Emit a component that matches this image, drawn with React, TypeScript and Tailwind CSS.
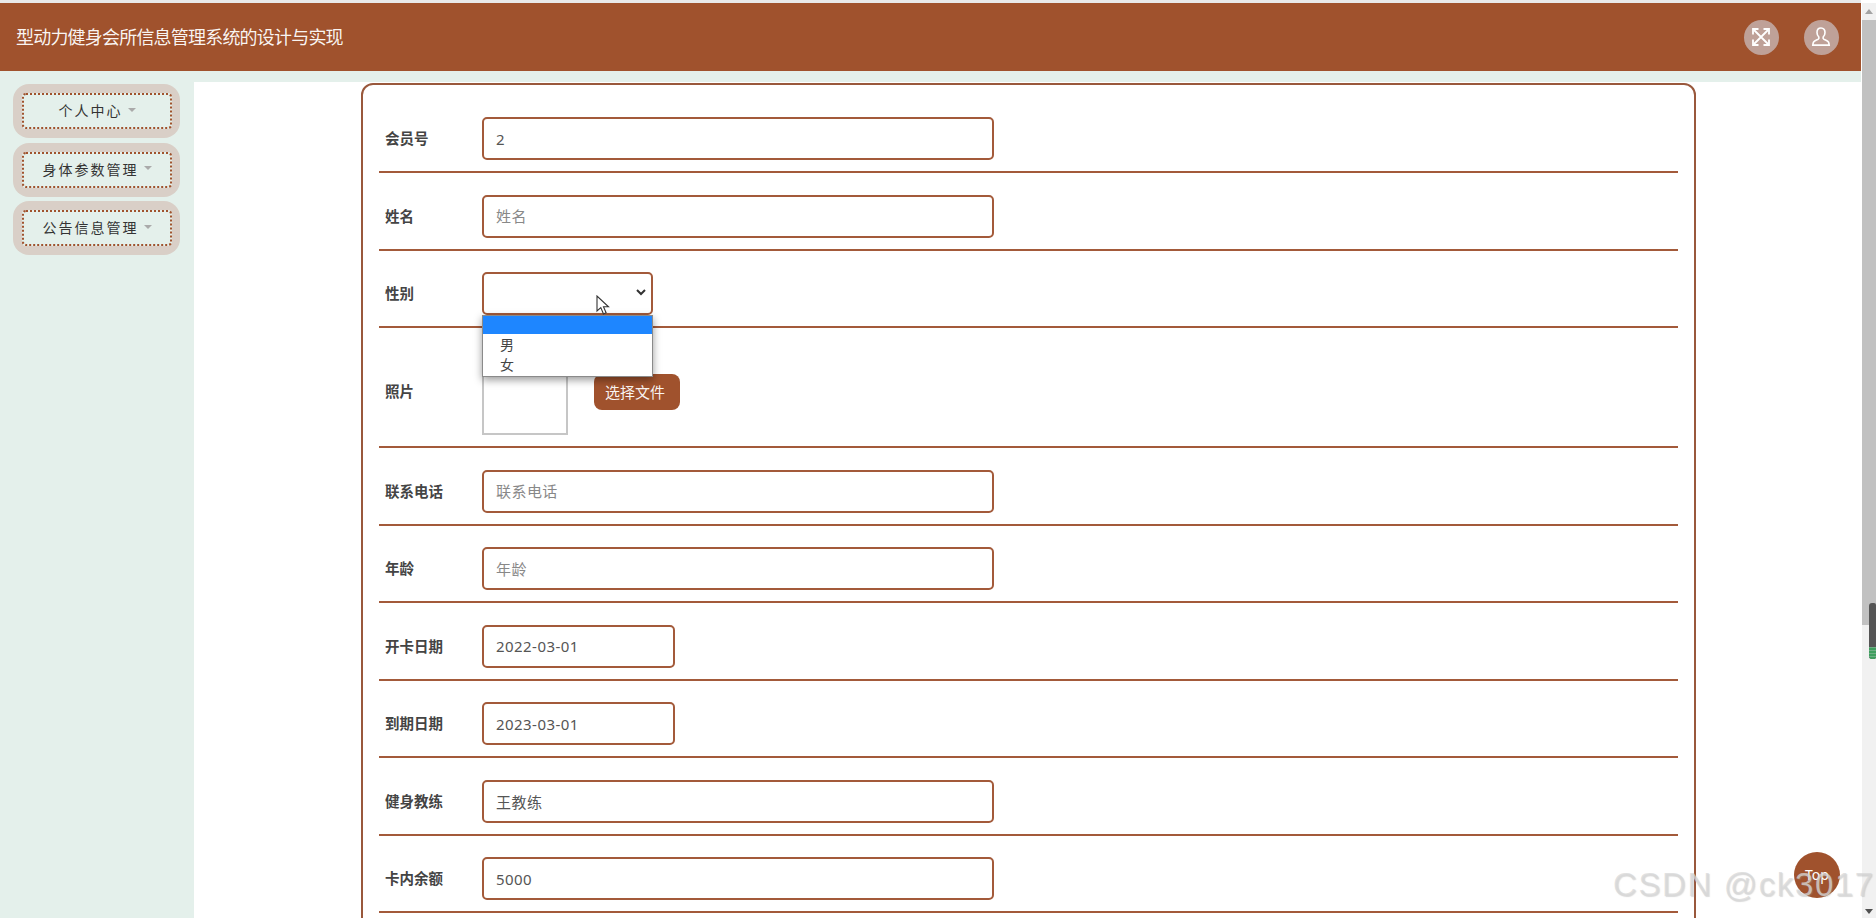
import React from 'react';

const cjk = "font-['Noto_Sans','Noto_Sans_CJK_SC',sans-serif]";

const menus = ['个人中心', '身体参数管理', '公告信息管理'];

const inputClass =
  'h-[43px] border-2 border-[#a35a3a] rounded-[5px] px-3 text-[15px] tracking-[0.45px] text-[#555] bg-white outline-none placeholder:text-[#888]';

const Row: React.FC<{ label: string; children: React.ReactNode }> = ({ label, children }) => (
  <div className="flex items-center pt-[21.500px] pb-[11px] border-b-2 border-[#a35a3a]">
    <label className="w-[103px] pl-[6px] pt-[1px] shrink-0 text-[14.5px] font-bold text-[#444]">{label}</label>
    {children}
  </div>
);

const ExpandIcon = () => (
  <svg width="20" height="20" viewBox="0 0 20 20" fill="none" stroke="white" strokeWidth="1.8">
    <path d="M3 3 17 17M17 3 3 17" />
    <path d="M2 7.500V2H7.500M12.500 2H18V7.500M18 12.500V18H12.500M7.500 18H2V12.500" />
  </svg>
);

const UserIcon = () => (
  <svg width="22" height="22" viewBox="0 0 22 22" fill="none" stroke="white" strokeWidth="1.6">
    <path d="M11 2c-2.700 0-4 2-4 4.400 0 2 .8 3.400 1.700 4.400.4.800.3 1.800-.4 2.300-1.500 1-4 1.300-4.800 3-.4.900-.6 2-.7 3h16.400c-.1-1-.3-2.100-.7-3-.8-1.700-3.300-2-4.800-3-.7-.5-.8-1.500-.4-2.300.9-1 1.700-2.400 1.700-4.400C15 4 13.700 2 11 2Z" />
  </svg>
);

export default function App() {
  return (
    <div className={`relative flex w-full h-[918px] overflow-hidden bg-white ${cjk}`}>
      <div className="flex-1 min-w-0 flex flex-col">
        <div className="h-[3px] bg-[#e9e9e9]" />
        {/* Header */}
        <header className="h-[68px] shrink-0 bg-[#a0522d] flex items-center justify-between pl-4 pr-[22.500px]">
          <h1 className="text-[18px] tracking-[-0.8px] text-white/95">型动力健身会所信息管理系统的设计与实现</h1>
          <div className="flex items-center gap-[25px]">
            <div className="w-[35px] h-[35px] rounded-full bg-[#bfa198] flex items-center justify-center">
              <ExpandIcon />
            </div>
            <div className="w-[35px] h-[35px] rounded-full bg-[#bfa198] flex items-center justify-center">
              <UserIcon />
            </div>
          </div>
        </header>

        <div className="flex-1 min-h-0 flex bg-[#e4f0eb]">
          {/* Sidebar */}
          <aside className="w-[194px] shrink-0 pt-[13px] pl-[13px] flex flex-col gap-[4.500px]">
            {menus.map((m) => (
              <div key={m} className="w-[167px] h-[54px] rounded-[16px] bg-[#d9cfc7] px-[9px] py-[9px]">
                <div className="w-[150px] h-[36px] bg-[#e4f0eb] border-2 border-dotted border-[#a0522d] rounded-[4px] flex items-center justify-center gap-[5px] text-sm tracking-[2px] text-[#333]">
                  <span className="mr-[-2px]">{m}</span>
                  <span className="w-0 h-0 ml-[2px] mb-[3px] border-x-[4px] border-x-transparent border-t-[4px] border-t-[#aaa]" />
                </div>
              </div>
            ))}
          </aside>

          {/* Main */}
          <main className="flex-1 min-w-0 mt-[11px] bg-white pl-[167px] pt-[1px]">
            <div className="w-[1335px] h-[900px] border-2 border-[#99583c] rounded-[12px] px-4 pt-[10.500px]">
              <Row label="会员号">
                <input className={`${inputClass} w-[512px]`} defaultValue="2" readOnly />
              </Row>
              <Row label="姓名">
                <input className={`${inputClass} w-[512px]`} placeholder="姓名" readOnly />
              </Row>
              <Row label="性别">
                <div className={`${inputClass} relative w-[171px]`}>
                  <svg className="absolute right-[5px] top-[15px]" width="10" height="7" viewBox="0 0 10 7" fill="none" stroke="#333" strokeWidth="2">
                    <path d="M1 1l4 4 4-4" />
                  </svg>
                  {/* open option list */}
                  <div className="absolute left-[-2px] top-[41px] w-[171px] h-[62px] z-10 bg-white border border-[#8a8a8a] shadow-[0_3px_8px_rgba(0,0,0,0.4)] text-sm text-[#444]">
                    <div className="h-[18px] bg-[#1e86ff]" />
                    <div className="h-[21px] pl-[17px] leading-[21px]">男</div>
                    <div className="h-[20px] pl-[17px] leading-[20px]">女</div>
                  </div>
                  {/* mouse pointer */}
                  <svg className="absolute left-[112px] top-[21px] z-20" width="14" height="20" viewBox="0 0 14 20">
                    <path d="M1 1v15l3.800-3.400L7.500 19l2.600-1.200-2.600-6H12.500Z" fill="white" stroke="#333" strokeWidth="1.100" />
                  </svg>
                </div>
              </Row>
              <div className="flex items-center pt-[21px] pb-[11px] border-b-2 border-[#a35a3a]">
                <label className="w-[103px] pl-[6px] shrink-0 text-[14.5px] font-bold text-[#444]">照片</label>
                <div className="w-[86px] h-[86px] border-2 border-[#c6c6c6]" />
                <button className="ml-[26px] w-[86px] h-[36px] rounded-[8px] bg-[#a0522d] pr-[4px] text-[15px] text-white/95">选择文件</button>
              </div>
              <Row label="联系电话">
                <input className={`${inputClass} w-[512px]`} placeholder="联系电话" readOnly />
              </Row>
              <Row label="年龄">
                <input className={`${inputClass} w-[512px]`} placeholder="年龄" readOnly />
              </Row>
              <Row label="开卡日期">
                <input className={`${inputClass} w-[193px]`} defaultValue="2022-03-01" readOnly />
              </Row>
              <Row label="到期日期">
                <input className={`${inputClass} w-[193px]`} defaultValue="2023-03-01" readOnly />
              </Row>
              <Row label="健身教练">
                <input className={`${inputClass} w-[512px]`} defaultValue="王教练" readOnly />
              </Row>
              <Row label="卡内余额">
                <input className={`${inputClass} w-[512px]`} defaultValue="5000" readOnly />
              </Row>
            </div>
          </main>
        </div>
      </div>

      {/* Scrollbar */}
      <div className="w-[14px] shrink-0 ml-px mt-[3px] bg-[#f1f1f1] flex flex-col items-center">
        <div className="h-[17px] shrink-0 flex items-center justify-center">
          <span className="w-0 h-0 border-x-[4px] border-x-transparent border-b-[5px] border-b-[#a3a3a3]" />
        </div>
        <div className="w-full h-[605px] bg-[#c1c1c1]" />
        <div className="mt-auto h-[14px] flex items-center justify-center">
          <span className="w-0 h-0 border-x-[4px] border-x-transparent border-t-[5px] border-t-[#505050]" />
        </div>
      </div>

      {/* Floating overlays */}
      <div className="absolute right-0 top-[603px] w-[7px] h-[56px] rounded-l-[3px] rounded-r-[2px] bg-[#555] overflow-hidden flex flex-col justify-end">
        <div className="h-[12px] bg-[repeating-linear-gradient(0deg,#3f9e5f_0,#3f9e5f_2px,#6fae85_2px,#6fae85_3px)]" />
      </div>
      <div className="absolute left-[1794px] top-[852px] w-[46px] h-[46px] rounded-full bg-[#a0522d] flex items-center justify-center text-sm text-white">
        Top
      </div>
      <div className="absolute left-[1613px] top-[866px] font-['Liberation_Sans',sans-serif] text-[33px] leading-[38px] tracking-[1.600px] whitespace-nowrap text-[#d8d8d8]/75 [text-shadow:1px_1px_1px_rgba(150,150,150,0.35)]">
        CSDN @ck3017
      </div>
    </div>
  );
}
